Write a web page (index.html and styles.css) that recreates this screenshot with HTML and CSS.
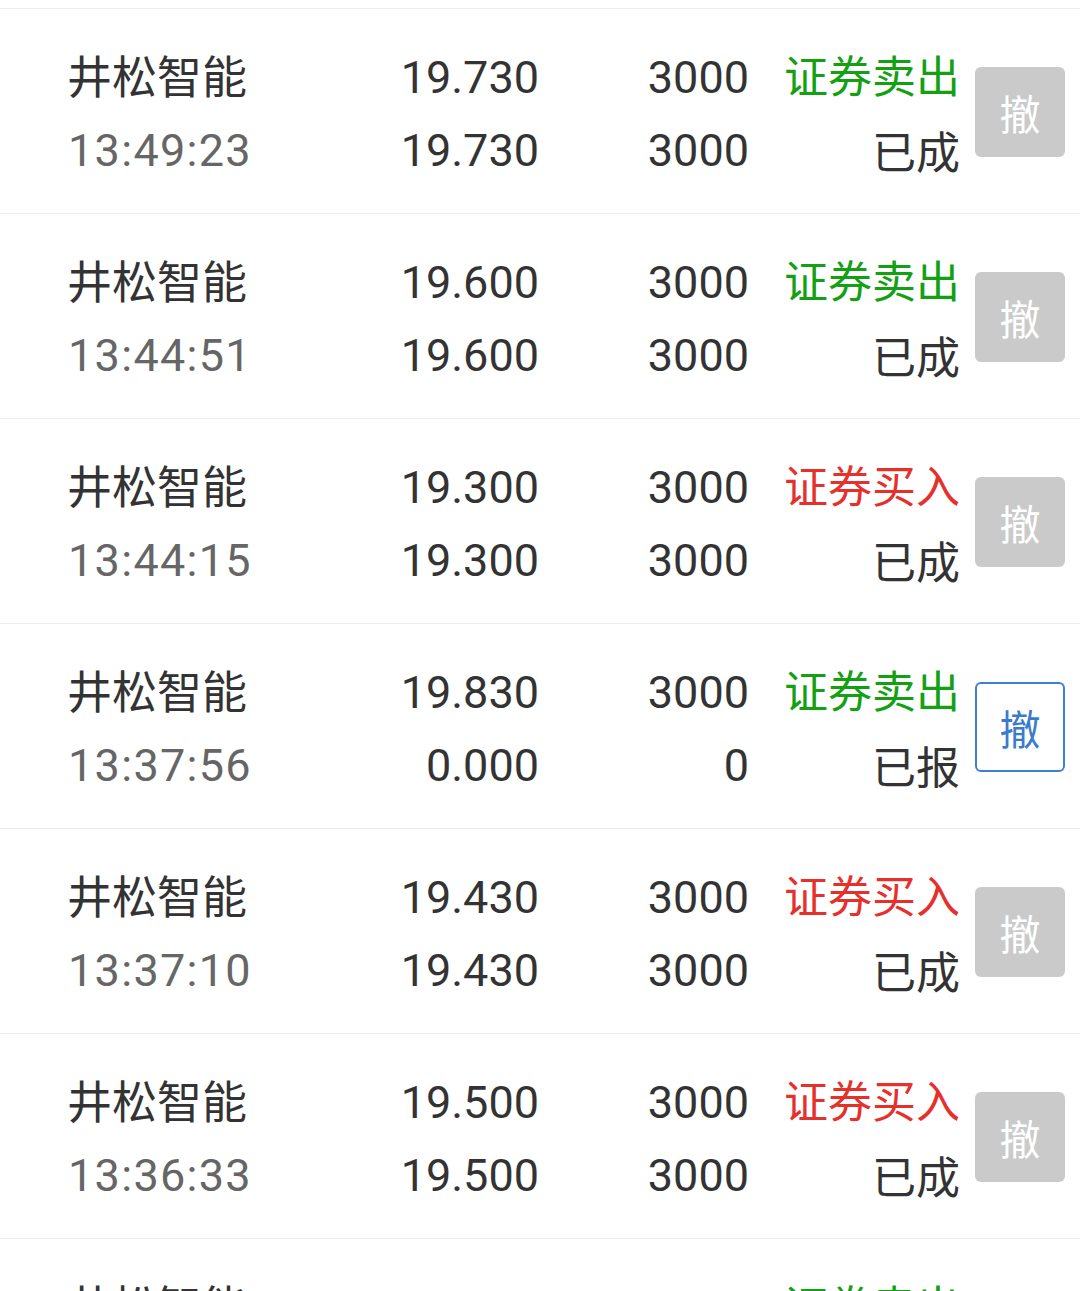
FILE: index.html
```html
<!DOCTYPE html>
<html lang="zh-CN">
<head>
<meta charset="utf-8">
<title>委托列表</title>
<link rel="stylesheet" href="styles.css">
</head>
<body>
<div class="list">
  <div class="prev"></div>

  <div class="row">
    <div class="cell name"><div class="l1">井松智能</div><div class="l2 time">13:49:23</div></div>
    <div class="cell num"><div class="l1">19.730</div><div class="l2">19.730</div></div>
    <div class="cell num"><div class="l1">3000</div><div class="l2">3000</div></div>
    <div class="cell num"><div class="l1 sell">证券卖出</div><div class="l2 cn">已成</div></div>
    <div class="btn off">撤</div>
  </div>

  <div class="row">
    <div class="cell name"><div class="l1">井松智能</div><div class="l2 time">13:44:51</div></div>
    <div class="cell num"><div class="l1">19.600</div><div class="l2">19.600</div></div>
    <div class="cell num"><div class="l1">3000</div><div class="l2">3000</div></div>
    <div class="cell num"><div class="l1 sell">证券卖出</div><div class="l2 cn">已成</div></div>
    <div class="btn off">撤</div>
  </div>

  <div class="row">
    <div class="cell name"><div class="l1">井松智能</div><div class="l2 time">13:44:15</div></div>
    <div class="cell num"><div class="l1">19.300</div><div class="l2">19.300</div></div>
    <div class="cell num"><div class="l1">3000</div><div class="l2">3000</div></div>
    <div class="cell num"><div class="l1 buy">证券买入</div><div class="l2 cn">已成</div></div>
    <div class="btn off">撤</div>
  </div>

  <div class="row">
    <div class="cell name"><div class="l1">井松智能</div><div class="l2 time">13:37:56</div></div>
    <div class="cell num"><div class="l1">19.830</div><div class="l2">0.000</div></div>
    <div class="cell num"><div class="l1">3000</div><div class="l2">0</div></div>
    <div class="cell num"><div class="l1 sell">证券卖出</div><div class="l2 cn">已报</div></div>
    <div class="btn on">撤</div>
  </div>

  <div class="row">
    <div class="cell name"><div class="l1">井松智能</div><div class="l2 time">13:37:10</div></div>
    <div class="cell num"><div class="l1">19.430</div><div class="l2">19.430</div></div>
    <div class="cell num"><div class="l1">3000</div><div class="l2">3000</div></div>
    <div class="cell num"><div class="l1 buy">证券买入</div><div class="l2 cn">已成</div></div>
    <div class="btn off">撤</div>
  </div>

  <div class="row">
    <div class="cell name"><div class="l1">井松智能</div><div class="l2 time">13:36:33</div></div>
    <div class="cell num"><div class="l1">19.500</div><div class="l2">19.500</div></div>
    <div class="cell num"><div class="l1">3000</div><div class="l2">3000</div></div>
    <div class="cell num"><div class="l1 buy">证券买入</div><div class="l2 cn">已成</div></div>
    <div class="btn off">撤</div>
  </div>

  <div class="row">
    <div class="cell name"><div class="l1">井松智能</div><div class="l2 time">13:35:48</div></div>
    <div class="cell num"><div class="l1">19.800</div><div class="l2">19.800</div></div>
    <div class="cell num"><div class="l1">3000</div><div class="l2">3000</div></div>
    <div class="cell num"><div class="l1 sell">证券卖出</div><div class="l2 cn">已成</div></div>
    <div class="btn off">撤</div>
  </div>
</div>
</body>
</html>
```

FILE: styles.css
```css
html, body {
  margin: 0;
  padding: 0;
  background: #ffffff;
  overflow: hidden;
}

.list {
  font-family: Roboto, "Noto Sans CJK SC", sans-serif;
  color: #333333;
}

.prev {
  height: 8px;
  border-bottom: 1px solid #ececec;
}

.row {
  height: 204px;
  border-bottom: 1px solid #ececec;
  display: grid;
  grid-template-columns: 201px 268px 210px 211px 105px;
  align-items: center;
  padding: 0 15px 0 70px;
}

.cell {
  font-size: 45px;
  line-height: 73px;
  white-space: nowrap;
  padding-top: 6px;
}

.name {
  text-align: left;
}

.name .l1 {
  font-family: "Noto Sans CJK SC", sans-serif;
  font-size: 45px;
  margin-left: -3px;
  margin-top: -3px;
  margin-bottom: 3px;
}

.num {
  text-align: right;
}

.cn {
  font-family: "Noto Sans CJK SC", sans-serif;
  font-size: 44px;
}

.sell, .buy {
  font-family: "Noto Sans CJK SC", sans-serif;
  font-size: 44px;
  margin-top: -3px;
  margin-bottom: 3px;
}

.time {
  color: #666666;
  letter-spacing: 1.3px;
  margin-left: -2px;
}

.sell {
  color: #13a013;
}

.buy {
  color: #e5302c;
}

.btn {
  justify-self: end;
  width: 90px;
  height: 90px;
  box-sizing: border-box;
  border-radius: 6px;
  display: flex;
  align-items: center;
  justify-content: center;
  font-family: "Noto Sans CJK SC", sans-serif;
  font-size: 41px;
  line-height: 1;
  margin-top: 2px;
}

.off {
  background: #cacaca;
  color: #ffffff;
}

.on {
  background: #ffffff;
  border: 2px solid #3d7fd0;
  color: #3a7ccc;
}
```
